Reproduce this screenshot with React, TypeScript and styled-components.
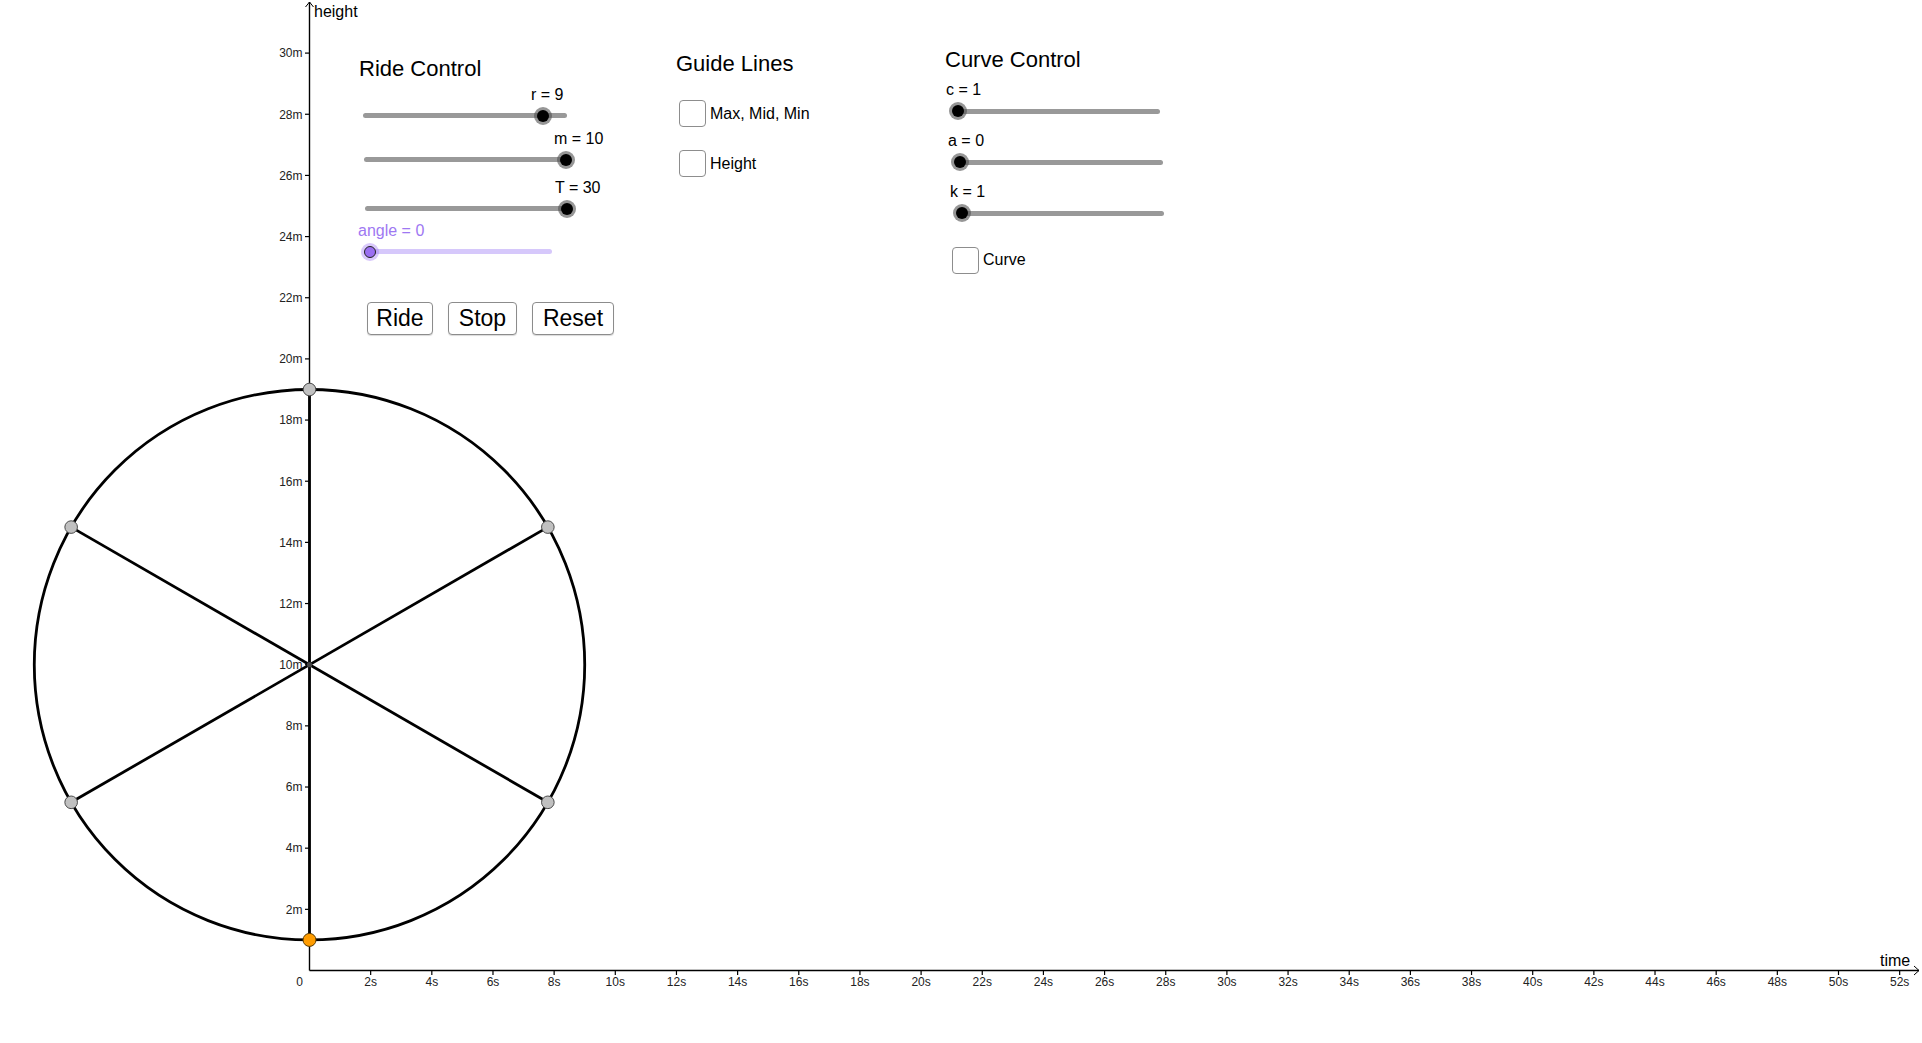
import React from 'react';
import styled, { createGlobalStyle } from 'styled-components';

const GlobalStyle = createGlobalStyle`
  html, body {
    margin: 0;
    padding: 0;
    background: #ffffff;
  }
  body {
    font-family: "Liberation Sans", Arial, sans-serif;
    color: #000;
  }
`;

// graph scale: 1 unit (metre / second) in pixels, origin of the axes
const PX = 30.58;
const OX = 309.5;
const OY = 970.5;
const sx = (t: number) => OX + t * PX;
const sy = (h: number) => OY - h * PX;

const Stage = styled.div`
  position: relative;
  width: 1922px;
  height: 1043px;
  overflow: hidden;
  background: #fff;
`;

const Canvas = styled.svg`
  position: absolute;
  inset: 0;
  width: 1922px;
  height: 1043px;
  font-family: "Liberation Sans", Arial, sans-serif;
`;

const Panel = styled.div<{ $left: number; $top: number }>`
  position: absolute;
  left: ${({ $left }) => $left}px;
  top: ${({ $top }) => $top}px;
  display: flex;
  flex-direction: column;
  align-items: flex-start;
`;

const Title = styled.div`
  font-size: 22px;
  line-height: 24px;
  height: 24px;
  white-space: nowrap;
`;

type Tone = 'plain' | 'violet';

const SliderBlock = styled.div<{ $mt: number }>`
  position: relative;
  margin-top: ${({ $mt }) => $mt}px;
  height: 42px;
  width: 240px;
`;

const SliderLabel = styled.div<{ $tone: Tone }>`
  height: 18px;
  font-size: 16px;
  line-height: 18px;
  white-space: nowrap;
  color: ${({ $tone }) => ($tone === 'violet' ? '#9e78f2' : '#000')};
`;

const TrackArea = styled.div`
  position: relative;
  height: 24px;
`;

const Track = styled.div<{ $tone: Tone }>`
  position: absolute;
  top: 9.5px;
  height: 5px;
  border-radius: 3px;
  background: ${({ $tone }) => ($tone === 'violet' ? '#d6c8fb' : '#999999')};
`;

const Knob = styled.div<{ $tone: Tone }>`
  position: absolute;
  top: 3px;
  width: 18px;
  height: 18px;
  border-radius: 50%;
  background: ${({ $tone }) =>
    $tone === 'violet' ? 'rgba(160, 120, 245, 0.4)' : 'rgba(80, 80, 80, 0.6)'};
  display: flex;
  align-items: center;
  justify-content: center;
  &::after {
    content: '';
    box-sizing: border-box;
    width: 12px;
    height: 12px;
    border-radius: 50%;
    background: ${({ $tone }) => ($tone === 'violet' ? '#9b6ff2' : '#000')};
    border: ${({ $tone }) => ($tone === 'violet' ? '1px solid #222' : 'none')};
  }
`;

const ButtonRow = styled.div<{ $mt: number }>`
  display: flex;
  gap: 15px;
  margin-top: ${({ $mt }) => $mt}px;
  margin-left: 8px;
`;

const RideButton = styled.button<{ $w: number }>`
  box-sizing: border-box;
  width: ${({ $w }) => $w}px;
  height: 33px;
  padding: 0;
  border: 1px solid #8c8c8c;
  border-radius: 4px;
  background: #fff;
  box-shadow: 0 1px 1px rgba(0, 0, 0, 0.15);
  font-family: "Liberation Sans", Arial, sans-serif;
  font-size: 23px;
  line-height: 31px;
  color: #000;
  cursor: pointer;
`;

const CheckRow = styled.label<{ $mt: number; $ml: number }>`
  display: flex;
  align-items: center;
  gap: 4px;
  margin-top: ${({ $mt }) => $mt}px;
  margin-left: ${({ $ml }) => $ml}px;
  font-size: 16px;
  white-space: nowrap;
`;

const Box = styled.input`
  appearance: none;
  box-sizing: border-box;
  width: 27px;
  height: 27px;
  margin: 0;
  border: 1.5px solid #8d8d8d;
  border-radius: 4px;
  background: #fff;
`;

interface SliderSpec {
  label: string;
  trackLeft: number;
  trackWidth: number;
  knob: number;
  mt: number;
  tone?: Tone;
}

const Slider: React.FC<SliderSpec> = ({ label, trackLeft, trackWidth, knob, mt, tone = 'plain' }) => (
  <SliderBlock $mt={mt}>
    <SliderLabel $tone={tone} style={{ marginLeft: knob - 12 }}>
      {label}
    </SliderLabel>
    <TrackArea>
      <Track $tone={tone} style={{ left: trackLeft, width: trackWidth }} />
      <Knob $tone={tone} style={{ left: knob - 9 }} />
    </TrackArea>
  </SliderBlock>
);

const rideSliders: SliderSpec[] = [
  { label: 'r = 9', trackLeft: 4, trackWidth: 204, knob: 184, mt: 4.5 },
  { label: 'm = 10', trackLeft: 5, trackWidth: 202, knob: 207, mt: 2 },
  { label: 'T = 30', trackLeft: 6, trackWidth: 202, knob: 208, mt: 7 },
  { label: 'angle = 0', trackLeft: 7, trackWidth: 186, knob: 11, mt: 1, tone: 'violet' },
];

const curveSliders: SliderSpec[] = [
  { label: 'c = 1', trackLeft: 10, trackWidth: 205, knob: 13, mt: 9 },
  { label: 'a = 0', trackLeft: 12, trackWidth: 206, knob: 15, mt: 9 },
  { label: 'k = 1', trackLeft: 14, trackWidth: 205, knob: 17, mt: 9 },
];

const Graph: React.FC = () => {
  const cx = sx(0);
  const cy = sy(10);
  const r = 9 * PX;
  const pt = (deg: number) => ({
    x: cx + r * Math.cos((deg * Math.PI) / 180),
    y: cy - r * Math.sin((deg * Math.PI) / 180),
  });
  const heights = Array.from({ length: 15 }, (_, i) => (i + 1) * 2);
  const times = Array.from({ length: 26 }, (_, i) => (i + 1) * 2);
  const spokes: [number, number][] = [
    [90, 270],
    [30, 210],
    [150, 330],
  ];
  const seats = [90, 30, 150, 210, 330];
  const bottom = pt(270);

  return (
    <Canvas viewBox="0 0 1922 1043">
      {/* axes */}
      <line x1={OX} y1={2} x2={OX} y2={OY} stroke="#000" strokeWidth={1.4} />
      <polyline points={`${OX - 4},7 ${OX},2 ${OX + 4},7`} fill="none" stroke="#000" strokeWidth={1} />
      <line x1={OX} y1={OY} x2={1919} y2={OY} stroke="#000" strokeWidth={1.4} />
      <polyline points={`1914,${OY - 4.5} 1919,${OY} 1914,${OY + 4.5}`} fill="none" stroke="#000" strokeWidth={1} />

      <text x={314} y={17} fontSize={16} fill="#000">height</text>
      <text x={1880} y={966} fontSize={16} fill="#000">time</text>

      {heights.map(h => (
        <g key={`h${h}`}>
          <line x1={OX - 4.5} y1={sy(h)} x2={OX} y2={sy(h)} stroke="#000" strokeWidth={1.2} />
          <text x={302.5} y={sy(h) + 4.3} fontSize={12} textAnchor="end" fill="#222">
            {h}m
          </text>
        </g>
      ))}

      <text x={303} y={986} fontSize={12} textAnchor="end" fill="#222">0</text>
      {times.map(t => (
        <g key={`t${t}`}>
          <line x1={sx(t)} y1={OY} x2={sx(t)} y2={OY + 4.5} stroke="#000" strokeWidth={1.2} />
          <text x={sx(t)} y={986} fontSize={12} textAnchor="middle" fill="#222">
            {t}s
          </text>
        </g>
      ))}

      {/* wheel */}
      <circle cx={cx} cy={cy} r={r} fill="none" stroke="#000" strokeWidth={2.8} />
      {spokes.map(([a, b]) => {
        const p = pt(a);
        const q = pt(b);
        return <line key={a} x1={p.x} y1={p.y} x2={q.x} y2={q.y} stroke="#000" strokeWidth={2.8} />;
      })}
      <circle cx={cx} cy={cy} r={2.6} fill="#444" />
      {seats.map(a => {
        const p = pt(a);
        return <circle key={a} cx={p.x} cy={p.y} r={6.3} fill="#c0c0c0" stroke="#4a4a4a" strokeWidth={1} />;
      })}
      <circle cx={bottom.x} cy={bottom.y} r={6.5} fill="#ff9c00" stroke="#5a3a00" strokeWidth={1} />
    </Canvas>
  );
};

export default function App() {
  return (
    <>
      <GlobalStyle />
      <Stage>
        <Graph />

        <Panel $left={359} $top={57}>
          <Title>Ride Control</Title>
          {rideSliders.map(s => (
            <Slider key={s.label} {...s} />
          ))}
          <ButtonRow $mt={38.5}>
            <RideButton $w={66}>Ride</RideButton>
            <RideButton $w={69}>Stop</RideButton>
            <RideButton $w={82}>Reset</RideButton>
          </ButtonRow>
        </Panel>

        <Panel $left={676} $top={52}>
          <Title>Guide Lines</Title>
          <CheckRow $mt={24} $ml={3}>
            <Box type="checkbox" />
            Max, Mid, Min
          </CheckRow>
          <CheckRow $mt={23} $ml={3}>
            <Box type="checkbox" />
            Height
          </CheckRow>
        </Panel>

        <Panel $left={945} $top={48}>
          <Title>Curve Control</Title>
          {curveSliders.map(s => (
            <Slider key={s.label} {...s} />
          ))}
          <CheckRow $mt={21.5} $ml={7}>
            <Box type="checkbox" />
            Curve
          </CheckRow>
        </Panel>
      </Stage>
    </>
  );
}
